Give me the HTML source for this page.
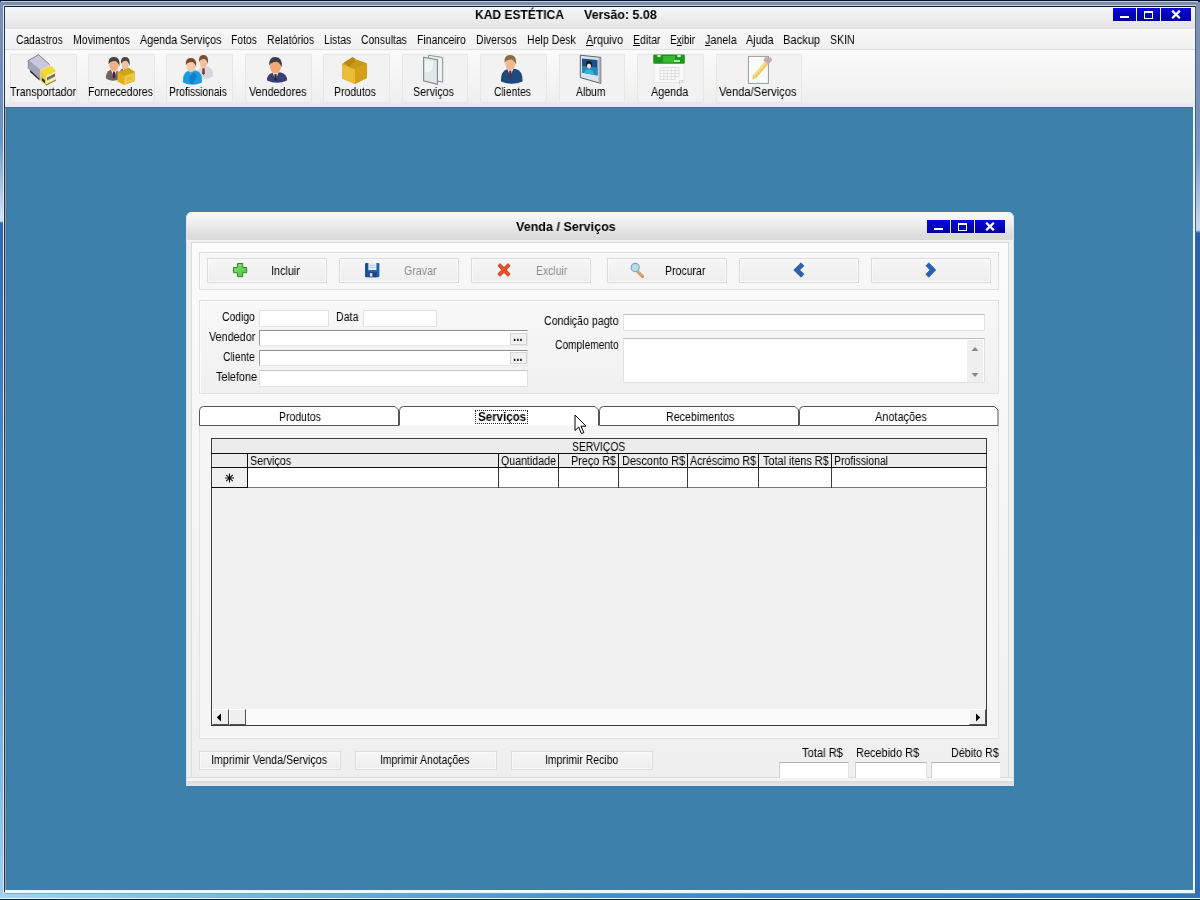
<!DOCTYPE html>
<html lang="pt-BR"><head><meta charset="utf-8"><title>KAD ESTÉTICA</title>
<style>
html,body{margin:0;padding:0}
body{width:1200px;height:900px;position:relative;overflow:hidden;background:#3d80ab;font-family:"Liberation Sans",sans-serif;font-size:12px;color:#000}
div,span,svg{position:absolute;box-sizing:border-box}
.t{white-space:nowrap;line-height:1;transform-origin:0 0;display:block;will-change:transform}
.tb{background:#f2f2f2;border:1px solid #e7e7e7;border-radius:1px}
.btn{background:linear-gradient(#f6f6f6,#eeeeee);border:1px solid #dcdcdc;box-shadow:inset 0 0 0 1px #f9f9f9}
.pan{border:1px solid #dfdfdf;background:#f7f7f7;box-shadow:inset 1px 1px 0 #fdfdfd}
.inp{background:#fff;border:1px solid #e2e2e2}
.inp3{background:#fff;border:1px solid #e8e8e8;border-top-color:#8e8e8e;border-left-color:#9a9a9a}
.dots{background:#f1f1f1;border:1px solid #d4d4d4}
.cb{background:linear-gradient(#0a0ae0,#000098);}
.hl{background:#111;height:1px}
.vl{background:#111;width:1px}
</style></head><body>

<div style="left:0;top:0;width:1200px;height:900px;background:#5a8cc0"></div>
<div style="left:0;top:0;width:5px;height:900px;background:linear-gradient(#7a8fb5 0,#6f8fba 110px,#6a95c6 140px,#d0e0f4 215px,#d0e0f4 221px,#3068b0 223px,#4f98d0 560px,#9dcdee 890px)"></div>
<div style="left:1195px;top:0;width:5px;height:900px;background:linear-gradient(#7f90b2 0,#7890b8 110px,#7498c8 150px,#c4d4ea 222px,#c4d4ea 230px,#2860a8 233px,#2c6cb4 560px,#2c70b8 900px)"></div>
<div style="left:0;top:0;width:1200px;height:7px;background:linear-gradient(#06102c 0,#06102c 1px,#bccbe2 1px,#bccbe2 2px,#7a8aa6 2px,#8092ae 5px,#c4d2ea 5px,#c4d2ea 6px,#18222e 6px)"></div>
<div style="left:0;top:0;width:2px;height:1px;background:#101c50"></div><div style="left:0;top:1px;width:1px;height:2px;background:#2a3870"></div><div style="left:1198px;top:0;width:2px;height:2px;background:#101c50"></div>
<div style="left:0;top:2px;width:3px;height:5px;background:#7a8fb5"></div><div style="left:1196px;top:2px;width:4px;height:5px;background:#7f90b2"></div>
<div style="left:3px;top:6px;width:1px;height:888px;background:#dbe8fa"></div>
<div style="left:4px;top:6px;width:1px;height:886px;background:#263648"></div>
<div style="left:1195px;top:6px;width:1px;height:886px;background:#4a6178"></div>
<div style="left:0;top:893px;width:1200px;height:7px;background:linear-gradient(90deg,#a4d2f0 0,#7ab4dc 250px,#4c8cc4 600px,#3474b4 1200px)"></div>
<div style="left:5px;top:893px;width:1190px;height:1px;background:#7f9db6;opacity:.8"></div>
<div style="left:0;top:898px;width:1200px;height:2px;background:linear-gradient(#e8fbff 0,#e8fbff 1px,#0c2038 1px)"></div>
<div style="left:5px;top:7px;width:1190px;height:886px;background:#3d80ab"></div>
<div style="left:5px;top:107px;width:1188px;height:2px;background:linear-gradient(#4f6f8c,#447aa2)"></div>
<div style="left:5px;top:108px;width:1px;height:782px;background:#8ca4b8"></div>
<div style="left:6px;top:108px;width:1px;height:782px;background:#4f7088"></div>
<div style="left:1193px;top:107px;width:2px;height:786px;background:#e6f8ff"></div>
<div style="left:5px;top:890px;width:1190px;height:3px;background:#eafaff"></div>
<div style="left:5px;top:7px;width:1190px;height:22px;background:linear-gradient(#f3f7fc,#f2f2f2 30%,#e2e2e2)"></div>
<span class="t" style="left:474.5px;top:7.8px;font-size:13px;font-weight:bold;transform:scaleX(0.926);">KAD ESTÉTICA</span>
<span class="t" style="left:583.5px;top:7.8px;font-size:13px;font-weight:bold;transform:scaleX(0.958);">Versão: 5.08</span>
<div class="cb" style="left:1113px;top:8px;width:23.0px;height:13px"></div>
<div style="left:1120.0px;top:15.8px;width:9px;height:2.4px;background:#fff"></div>
<div class="cb" style="left:1137px;top:8px;width:23.0px;height:13px"></div>
<div style="left:1144.0px;top:11.0px;width:9px;height:8px;border:1px solid #fff;border-top-width:2.5px"></div>
<div class="cb" style="left:1161px;top:8px;width:30.0px;height:13px"></div>
<svg style="left:1171.0px;top:10.0px" width="10" height="9" viewBox="0 0 10 9"><path d="M1.2 0.8L8.8 8.2M8.8 0.8L1.2 8.2" stroke="#fff" stroke-width="2.3"/></svg>
<div style="left:5px;top:29px;width:1190px;height:21px;background:linear-gradient(#f7f7f7,#f1f1f1)"></div>
<div style="left:5px;top:49px;width:1190px;height:1.5px;background:#dddfe1"></div>
<span class="t" style="left:16.2px;top:33.5px;font-size:12px;transform:scaleX(0.855);">Cadastros</span>
<span class="t" style="left:73.0px;top:33.5px;font-size:12px;transform:scaleX(0.881);">Movimentos</span>
<span class="t" style="left:139.5px;top:33.5px;font-size:12px;transform:scaleX(0.898);">Agenda Serviços</span>
<span class="t" style="left:231.2px;top:33.5px;font-size:12px;transform:scaleX(0.860);">Fotos</span>
<span class="t" style="left:267.0px;top:33.5px;font-size:12px;transform:scaleX(0.874);">Relatórios</span>
<span class="t" style="left:324.0px;top:33.5px;font-size:12px;transform:scaleX(0.868);">Listas</span>
<span class="t" style="left:361.2px;top:33.5px;font-size:12px;transform:scaleX(0.858);">Consultas</span>
<span class="t" style="left:417.0px;top:33.5px;font-size:12px;transform:scaleX(0.873);">Financeiro</span>
<span class="t" style="left:476.2px;top:33.5px;font-size:12px;transform:scaleX(0.874);">Diversos</span>
<span class="t" style="left:526.9px;top:33.5px;font-size:12px;transform:scaleX(0.882);">Help Desk</span>
<span class="t" style="left:586.0px;top:33.5px;font-size:12px;transform:scaleX(0.912);"><u>A</u>rquivo</span>
<span class="t" style="left:632.5px;top:33.5px;font-size:12px;transform:scaleX(0.877);"><u>E</u>ditar</span>
<span class="t" style="left:670.0px;top:33.5px;font-size:12px;transform:scaleX(0.833);">E<u>x</u>ibir</span>
<span class="t" style="left:704.5px;top:33.5px;font-size:12px;transform:scaleX(0.897);"><u>J</u>anela</span>
<span class="t" style="left:745.5px;top:33.5px;font-size:12px;transform:scaleX(0.899);">Ajuda</span>
<span class="t" style="left:783.1px;top:33.5px;font-size:12px;transform:scaleX(0.927);">Backup</span>
<span class="t" style="left:829.9px;top:33.5px;font-size:12px;transform:scaleX(0.881);">SKIN</span>
<div style="left:5px;top:50px;width:1190px;height:57px;background:linear-gradient(#fafafa 0,#f5f5f5 28px,#eef0ec 52px,#e9e5f7 54px,#e8e4f8 57px)"></div>
<div class="tb" style="left:10px;top:54px;width:67px;height:49px"></div>
<span class="t" style="left:9.5px;top:86.2px;font-size:12px;transform:scaleX(0.881);">Transportador</span>
<div class="tb" style="left:88px;top:54px;width:67px;height:49px"></div>
<span class="t" style="left:88.1px;top:86.2px;font-size:12px;transform:scaleX(0.877);">Fornecedores</span>
<div class="tb" style="left:166px;top:54px;width:67px;height:49px"></div>
<span class="t" style="left:169.1px;top:86.2px;font-size:12px;transform:scaleX(0.851);">Profissionais</span>
<div class="tb" style="left:245px;top:54px;width:67px;height:49px"></div>
<span class="t" style="left:248.5px;top:86.2px;font-size:12px;transform:scaleX(0.898);">Vendedores</span>
<div class="tb" style="left:323px;top:54px;width:67px;height:49px"></div>
<span class="t" style="left:334.1px;top:86.2px;font-size:12px;transform:scaleX(0.872);">Produtos</span>
<div class="tb" style="left:402px;top:54px;width:66px;height:49px"></div>
<span class="t" style="left:413.1px;top:86.2px;font-size:12px;transform:scaleX(0.889);">Serviços</span>
<div class="tb" style="left:480px;top:54px;width:67px;height:49px"></div>
<span class="t" style="left:494.1px;top:86.2px;font-size:12px;transform:scaleX(0.851);">Clientes</span>
<div class="tb" style="left:559px;top:54px;width:66px;height:49px"></div>
<span class="t" style="left:575.5px;top:86.2px;font-size:12px;transform:scaleX(0.867);">Album</span>
<div class="tb" style="left:637px;top:54px;width:67px;height:49px"></div>
<span class="t" style="left:650.5px;top:86.2px;font-size:12px;transform:scaleX(0.899);">Agenda</span>
<div class="tb" style="left:716px;top:54px;width:86px;height:49px"></div>
<span class="t" style="left:718.5px;top:86.2px;font-size:12px;transform:scaleX(0.929);">Venda/Serviços</span>
<svg style="left:0;top:50px" width="1200" height="57" viewBox="0 50 1200 57"><g><path d="M28 60.5L38.5 54.5L49.5 64.5L49.5 70L40.5 75.5L40.5 80L29 69.5Z" fill="#b4b4c8"/><path d="M28 60.5L38.5 54.5L49.5 64.5L40 69.5Z" fill="#c8c8dc"/><path d="M40 69.5L49.5 64.5L49.5 70L40.5 75.5Z" fill="#e8d8c0"/><path d="M29 60.5L40 69.5L40.5 80L29 69.5Z" fill="#a4a4b8"/><path d="M30 70L39.5 78.8L39.5 80.5L30 72Z" fill="#2a2a30"/><path d="M28.3 69L28.3 60.5L38.5 54.7L49.6 64.6" fill="none" stroke="#70707e" stroke-width=".8"/><path d="M40.5 71L51 66L56 71L56 80L46 85.5L41 81.5Z" fill="#e8d048"/><path d="M40.5 71L51 66L56 71L46 76Z" fill="#f0dc30"/><path d="M46 76L56 71L56 80L46 85.5Z" fill="#f4ecb0"/><path d="M47 77.5L55 73.5L55 76.5L47 80.5Z" fill="#707070"/><path d="M41.5 80L45 83.5L45 80.5L42.5 78Z" fill="#2a2a20"/><path d="M46 84.5L56 79.5L56 80.5L46 85.8Z" fill="#807820"/></g><path d="M119 78Q118.5 70 123.2 68L128.8 68Q133.5 70 133 78Q126.0 82.5 119 78Z" fill="#6a6258"/><path d="M122.3 68L125.3 75L128.3 68Z" fill="#f4f4f4"/><path d="M124.3 69.5L126.3 69.5L126.6 75L125.3 76.5L124.0 75Z" fill="#802020"/><ellipse cx="125.3" cy="64.5" rx="3.5" ry="5.7" fill="#f0c0a0"/><path d="M121.0 63.8Q120.5 56.5 125.3 57.0Q130.6 57.0 129.6 65.8Q128.1 61.2 126.1 60.8Q122.8 60.5 121.0 63.8Z" fill="#48443c"/><path d="M106 78.5Q105.5 72 110.2 70L115.8 70Q120.5 72 120 78.5Q113.0 83.0 106 78.5Z" fill="#6c665e"/><path d="M111 70L114 77L117 70Z" fill="#f4f4f4"/><path d="M113 71.5L115 71.5L115.3 77L114 78.5L112.7 77Z" fill="#5a1848"/><ellipse cx="114" cy="65.0" rx="4.7" ry="6.2" fill="#f0b088"/><path d="M108.5 64.2Q108.0 56.5 114.0 57.0Q120.5 57.0 119.5 66.2Q118.0 61.8 115.1 61.0Q110.7 60.8 108.5 64.2Z" fill="#48403a"/><path d="M117.5 72.5L128.5 68L135 72L135 81L124 85L117.5 81.5Z" fill="#e0b020"/><path d="M117.5 72.5L128.5 68L135 72L124 76Z" fill="#d0a418"/><path d="M124 76L135 72L135 81L124 85Z" fill="#e8c030"/><path d="M125.5 77.5L133.5 74.5L133.5 79.5L125.5 82.5Z" fill="none" stroke="#f0d468" stroke-width="1"/><path d="M197.5 76.5Q197.0 68.5 202.2 66.5L208.3 66.5Q213.5 68.5 213 76.5Q205.2 81.0 197.5 76.5Z" fill="#d4d8dc"/><path d="M200.5 66.5L203.5 73.5L206.5 66.5Z" fill="#f4d8d8"/><path d="M202.5 68.0L204.5 68.0L204.8 73.5L203.5 75.0L202.2 73.5Z" fill="#802838"/><ellipse cx="203.5" cy="62.7" rx="3.7" ry="5.9" fill="#f0c0a0"/><path d="M199.0 62.0Q198.5 54.5 203.5 55.0Q209.0 55.0 208.0 64.0Q206.5 59.5 204.4 58.9Q200.8 58.6 199.0 62.0Z" fill="#7a5030"/><path d="M183 82.5Q182.5 72.5 188.7 70.5L196.3 70.5Q202.5 72.5 202 82.5Q192.5 87.0 183 82.5Z" fill="#1c9ce0"/><path d="M188 70.5L191 77.5L194 70.5Z" fill="#28a8e8"/><ellipse cx="191" cy="66.0" rx="4.5" ry="6.2" fill="#f4c8a8"/><path d="M185.8 65.2Q185.2 57.5 191.0 58.0Q197.2 58.0 196.2 67.2Q194.8 62.8 192.1 62.0Q187.8 61.8 185.8 65.2Z" fill="#7a4a28"/><path d="M189 76L194 72L197 76L193 84L190 83Z" fill="#1470c0" opacity=".7"/><path d="M267 80.5Q266.5 74.5 273.0 72.5L281.0 72.5Q287.5 74.5 287 80.5Q277.0 85.0 267 80.5Z" fill="#3c3c7c"/><path d="M272.5 72.5L275.5 79.5L278.5 72.5Z" fill="#f4f4f4"/><path d="M274.5 74.0L276.5 74.0L276.8 79.5L275.5 81.0L274.2 79.5Z" fill="#183818"/><ellipse cx="275.5" cy="66.2" rx="5.5" ry="7.4" fill="#f4a878"/><path d="M269.2 65.5Q268.8 56.5 275.5 57.0Q282.8 57.0 281.8 67.5Q280.2 63.0 276.8 61.8Q271.8 61.5 269.2 65.5Z" fill="#3c3c46"/><path d="M342 64L352 58L367 63.5L367 78L355 84L342 78.5Z" fill="#e4b428"/><path d="M342 64L352 58L367 63.5L355 69.5Z" fill="#c89818"/><path d="M344 62.5L352.5 57L355 58.5L354.5 62L351 64.5L350 67.5Z" fill="#b88810"/><path d="M355 69.5L367 63.5L367 78L355 84Z" fill="#d4a018"/><path d="M342 64L355 69.5L355 84L342 78.5Z" fill="#ecbc38"/><path d="M428.6 55.3L442.7 57.5L442.7 82.2L428.6 79Z" fill="#eef2f2" stroke="#8a9292" stroke-width="1"/><path d="M423.6 57.3L437.4 59.8L437.4 84.2L423.6 80.8Z" fill="#dfe8e8" stroke="#7f8888" stroke-width="1.1"/><path d="M425 60L433 61.5Q434 70 429 72L425 72Z" fill="#f4f8f8" opacity=".8"/><path d="M501 81.5Q500.5 71 507.4 69L516.0 69Q523.0 71 522.5 81.5Q511.8 86.0 501 81.5Z" fill="#1c4a7c"/><path d="M507.3 69L510.3 76L513.3 69Z" fill="#f4f4f4"/><path d="M509.3 70.5L511.3 70.5L511.6 76L510.3 77.5L509.0 76Z" fill="#801828"/><ellipse cx="510.3" cy="63.5" rx="5.0" ry="6.7" fill="#f0b890"/><path d="M504.6 62.8Q504.1 54.5 510.3 55.0Q517.0 55.0 516.0 64.8Q514.5 60.2 511.4 59.4Q506.9 59.1 504.6 62.8Z" fill="#8a6a40"/><path d="M580.3 55.2L600.8 57.4L600.8 83.4L580.3 77.6Z" fill="#d8e4ee" stroke="#5c6468" stroke-width="1"/><path d="M582 58.5L597.5 60L597.5 75.5L582 72.5Z" fill="#1c5088"/><path d="M582 66L597.5 67.5L597.5 75.5L582 72.5Z" fill="#2a88b8"/><ellipse cx="589" cy="64.5" rx="3" ry="3.4" fill="#101418"/><ellipse cx="589" cy="66" rx="2.2" ry="2.6" fill="#f4d8c8"/><path d="M584.5 73L585.5 70.5Q589 68.5 592.5 70.8L594 74.8Z" fill="#30b8d8"/><path d="M598.5 58L600.5 58.2L600.5 82.5L598.5 82Z" fill="#a8b0b8"/><rect x="654" y="63" width="30" height="19.5" fill="#f8f8f8" stroke="#e4e4e4" stroke-width=".8"/><rect x="653.2" y="54.6" width="31.6" height="9.2" rx="1" fill="#1c961a"/><rect x="663" y="56" width="12" height="6.5" fill="#44c038" opacity=".8"/><ellipse cx="659" cy="56" rx="2" ry="1.3" fill="#c8f0c0"/><ellipse cx="679" cy="56" rx="2" ry="1.3" fill="#c8f0c0"/><rect x="674" y="60" width="6" height="2" fill="#a8f0a0"/><path d="M660 67.5H679M660 70.5H679M660 73.5H679M660 76.5H679M660 79.5H675M660 67.5V79.5M663.8 67.5V79.5M667.6 67.5V79.5M671.4 67.5V79.5M675.2 67.5V79.5M679 67.5V76.5" stroke="#dcdcdc" stroke-width=".8" fill="none"/><path d="M679.5 80.5H683.5L679.5 84Z" fill="#f4f4f4" stroke="#c4c4c4" stroke-width=".6"/><rect x="748.4" y="56.4" width="20" height="27" fill="#f8fcfa" stroke="#9a9a9a" stroke-width="1"/><path d="M752.3 79.6L753.2 75.2L766.5 60L769.6 62.6L756.4 77.8Z" fill="#f0c85c"/><path d="M753.2 75.2L766.5 60L768 61.3L754.6 76.6Z" fill="#f8dc90"/><path d="M764 58.5L767 56.5L768.5 59L771 57L772 60.5L768.5 64L763.5 61Z" fill="#c0a8b4"/></svg>
<div style="left:186px;top:212px;width:828px;height:574px;background:#eef0ee;border-radius:6px 6px 0 0;border-left:1px solid #cfe4f4;border-right:1px solid #d4e6f2;border-bottom:1px solid #d4e8f8"></div>
<div style="left:186px;top:212px;width:828px;height:30px;background:linear-gradient(#f9fcf9 0,#f6f6f6 4px,#e8e8e8 16px,#dcdcdc 23px,#dadada 28.5px,#f2f2f2 28.5px,#f2f2f2 30px);border-radius:6px 6px 0 0;border-left:1px solid #d8e8f4;border-right:1px solid #d8e8f4"></div>
<div style="left:187px;top:777px;width:826px;height:8px;background:linear-gradient(#dedede 0,#dedede 1px,#f4f4f4 1px,#f4f4f4 4px,#dadada 4px,#e6e6e6 8px)"></div>
<div style="left:191px;top:242px;width:818px;height:535px;background:linear-gradient(#fbfbfb,#f4f4f4 65%,#efefef);border:1px solid #dadcda;border-bottom:none"></div>
<span class="t" style="left:515.5px;top:219.5px;font-size:13px;font-weight:bold;transform:scaleX(0.965);">Venda / Serviços</span>
<div class="cb" style="left:927px;top:220px;width:22.6px;height:13px"></div>
<div style="left:933.8px;top:227.8px;width:9px;height:2.4px;background:#fff"></div>
<div class="cb" style="left:951.2px;top:220px;width:22.6px;height:13px"></div>
<div style="left:958.0px;top:223.0px;width:9px;height:8px;border:1px solid #fff;border-top-width:2.5px"></div>
<div class="cb" style="left:975.2px;top:220px;width:29.6px;height:13px"></div>
<svg style="left:985.0px;top:222.0px" width="10" height="9" viewBox="0 0 10 9"><path d="M1.2 0.8L8.8 8.2M8.8 0.8L1.2 8.2" stroke="#fff" stroke-width="2.3"/></svg>
<div class="pan" style="left:199px;top:252px;width:800px;height:38px"></div>
<div class="btn" style="left:207px;top:258px;width:120px;height:25px"></div>
<div class="btn" style="left:339px;top:258px;width:120px;height:25px"></div>
<div class="btn" style="left:471px;top:258px;width:120px;height:25px"></div>
<div class="btn" style="left:607px;top:258px;width:120px;height:25px"></div>
<div class="btn" style="left:739px;top:258px;width:120px;height:25px"></div>
<div class="btn" style="left:871px;top:258px;width:120px;height:25px"></div>
<span class="t" style="left:271.1px;top:265.4px;font-size:12px;transform:scaleX(0.903);">Incluir</span>
<span class="t" style="left:403.7px;top:265.4px;font-size:12px;color:#8c8c8c;transform:scaleX(0.886);">Gravar</span>
<span class="t" style="left:536.2px;top:265.4px;font-size:12px;color:#8c8c8c;transform:scaleX(0.869);">Excluir</span>
<span class="t" style="left:664.5px;top:265.4px;font-size:12px;transform:scaleX(0.878);">Procurar</span>
<svg style="left:232px;top:262px" width="16" height="16" viewBox="0 0 16 16"><defs><linearGradient id="gp" x1="0" y1="0" x2="1" y2="1"><stop offset="0" stop-color="#8ae07a"/><stop offset="1" stop-color="#48c038"/></linearGradient></defs><path d="M5.5 1.5h5.2v4h4v5.2h-4v4h-5.2v-4h-4v-5.2h4z" fill="url(#gp)" stroke="#348a28" stroke-width="1"/></svg>
<svg style="left:364px;top:262px" width="17" height="17" viewBox="0 0 17 17"><rect x="1.2" y="1" width="14.2" height="14.2" rx="1.2" fill="#2462ac"/><rect x="1.2" y="1" width="2.4" height="14.2" rx="1" fill="#1c4c90"/><rect x="4.4" y="1" width="8" height="7" fill="#e4f2f8"/><path d="M5.5 3.3h6M5.5 5.5h6" stroke="#a8c8dc" stroke-width=".9"/><rect x="4.2" y="10.2" width="8.6" height="5" fill="#1c4480"/><rect x="5.8" y="11.2" width="2.6" height="3.4" fill="#d0e0f0"/></svg>
<svg style="left:496.2px;top:262px" width="16" height="16" viewBox="0 0 16 16"><path d="M2 3.5L4 1.5L8 5.5L12 1.5L14.2 3.8L10.4 8L14.2 12L12 14.4L8 10.4L4 14.4L1.8 12L5.6 8Z" fill="#e8502a" stroke="#c03a18" stroke-width=".8"/></svg>
<svg style="left:629px;top:262px" width="16" height="16" viewBox="0 0 16 16"><path d="M8.6 9.6L13.6 14.6" stroke="#c08850" stroke-width="2.8" stroke-linecap="round"/><path d="M8.8 9.4L13.4 14" stroke="#f0d8b0" stroke-width="1" stroke-linecap="round"/><circle cx="6.2" cy="5.5" r="4.1" fill="#b8dcf0" stroke="#88a0b0" stroke-width="1.1"/></svg>
<svg style="left:792px;top:261px" width="14" height="18" viewBox="0 0 14 18"><path d="M1.7 9L9 1.8L12 4.8L7.7 9L12 13.2L9 16.2Z" fill="#2a62b0" stroke="#1c4888" stroke-width=".6"/></svg>
<svg style="left:924px;top:261px" width="14" height="18" viewBox="0 0 14 18"><path d="M11.8 9L4.8 1.8L1.9 4.8L6 9L1.9 13.2L4.8 16.2Z" fill="#2a62b0" stroke="#1c4888" stroke-width=".6"/></svg>
<div class="pan" style="left:199px;top:300px;width:800px;height:94px;background:linear-gradient(#f8f8f8,#f0f0f0)"></div>
<span class="t" style="left:222.2px;top:310.6px;font-size:12px;transform:scaleX(0.863);">Codigo</span>
<div class="inp" style="left:259px;top:310px;width:70px;height:17px"></div>
<span class="t" style="left:336.2px;top:310.6px;font-size:12px;transform:scaleX(0.888);">Data</span>
<div class="inp" style="left:363px;top:310px;width:74px;height:17px"></div>
<span class="t" style="left:208.7px;top:330.6px;font-size:12px;transform:scaleX(0.901);">Vendedor</span>
<div class="inp3" style="left:259px;top:330px;width:269px;height:16px"></div>
<span class="t" style="left:223.0px;top:350.6px;font-size:12px;transform:scaleX(0.849);">Cliente</span>
<div class="inp3" style="left:259px;top:350px;width:269px;height:16px"></div>
<span class="t" style="left:215.5px;top:370.6px;font-size:12px;transform:scaleX(0.904);">Telefone</span>
<div class="inp" style="left:259px;top:370px;width:269px;height:17px;border-top-color:#c8c8c8"></div>
<div class="dots" style="left:510.3px;top:332.5px;width:16.5px;height:12px"></div>
<span class="t" style="left:512.8px;top:328.4px;font-size:15px;font-weight:bold;transform:scaleX(0.768);">...</span>
<div class="dots" style="left:510.3px;top:352px;width:16.5px;height:12px"></div>
<span class="t" style="left:512.8px;top:348.4px;font-size:15px;font-weight:bold;transform:scaleX(0.768);">...</span>
<span class="t" style="left:544.2px;top:314.8px;font-size:12px;transform:scaleX(0.886);">Condição pagto</span>
<div class="inp" style="left:623px;top:314px;width:362px;height:17px;border-top-color:#bdbdbd"></div>
<span class="t" style="left:555.0px;top:338.5px;font-size:12px;transform:scaleX(0.853);">Complemento</span>
<div class="inp" style="left:623px;top:338px;width:362px;height:45px;border-top-color:#bdbdbd"></div>
<div style="left:967px;top:340px;width:16px;height:42px;background:#efefef"></div>
<svg style="left:970px;top:344px" width="10" height="36" viewBox="0 0 10 36"><path d="M1.5 7L5 3L8.5 7Z M1.5 29L5 33L8.5 29Z" fill="#8a8a8a"/></svg>
<div style="left:199px;top:425px;width:800px;height:314px;background:#f5f5f5;border:1px solid #e4e4e4;border-top:none"></div>
<svg style="left:199px;top:406px" width="201" height="20.5" viewBox="0 0 201 20.5"><path d="M0.5 19.5V4.5Q0.5 0.5 4.5 0.5H196L199.5 4V19.5Z" fill="#fff" stroke="#555" stroke-width="1"/></svg>
<svg style="left:399px;top:406px" width="201" height="20.5" viewBox="0 0 201 20.5"><path d="M0.5 19.5V4.5Q0.5 0.5 4.5 0.5H196L199.5 4V19.5" fill="#fff" stroke="#555" stroke-width="1"/></svg>
<svg style="left:599px;top:406px" width="201" height="20.5" viewBox="0 0 201 20.5"><path d="M0.5 19.5V4.5Q0.5 0.5 4.5 0.5H196L199.5 4V19.5Z" fill="#fff" stroke="#555" stroke-width="1"/></svg>
<svg style="left:799px;top:406px" width="200.5" height="20.5" viewBox="0 0 200.5 20.5"><path d="M0.5 19.5V4.5Q0.5 0.5 4.5 0.5H195.5L199.0 4V19.5Z" fill="#fff" stroke="#555" stroke-width="1"/></svg>
<span class="t" style="left:279.1px;top:411.4px;font-size:12px;transform:scaleX(0.872);">Produtos</span>
<span class="t" style="left:477.5px;top:411.4px;font-size:12px;font-weight:bold;transform:scaleX(0.963);">Serviços</span>
<div style="left:475px;top:410px;width:53px;height:14px;border:1px dotted #222"></div>
<span class="t" style="left:665.7px;top:411.4px;font-size:12px;transform:scaleX(0.890);">Recebimentos</span>
<span class="t" style="left:874.7px;top:411.4px;font-size:12px;transform:scaleX(0.913);">Anotações</span>
<div style="left:211px;top:438px;width:776px;height:288px;background:#f0f0f0;border:1px solid #3c3c3c"></div>
<div style="left:212px;top:439px;width:774px;height:28px;background:#ececec"></div>
<div style="left:248px;top:468px;width:738px;height:19px;background:#fff"></div>
<div class="hl" style="left:211px;top:453px;width:776px"></div>
<div class="hl" style="left:211px;top:467px;width:776px"></div>
<div class="hl" style="left:211px;top:487px;width:37px"></div>
<div class="hl" style="left:248px;top:487px;width:739px;background:#777"></div>
<div class="vl" style="left:247px;top:453px;height:15px"></div>
<div class="vl" style="left:247px;top:468px;height:20px;background:#111"></div>
<div class="vl" style="left:498px;top:453px;height:15px"></div>
<div class="vl" style="left:498px;top:468px;height:20px;background:#3a3a3a"></div>
<div class="vl" style="left:558px;top:453px;height:15px"></div>
<div class="vl" style="left:558px;top:468px;height:20px;background:#3a3a3a"></div>
<div class="vl" style="left:618px;top:453px;height:15px"></div>
<div class="vl" style="left:618px;top:468px;height:20px;background:#3a3a3a"></div>
<div class="vl" style="left:687px;top:453px;height:15px"></div>
<div class="vl" style="left:687px;top:468px;height:20px;background:#3a3a3a"></div>
<div class="vl" style="left:758px;top:453px;height:15px"></div>
<div class="vl" style="left:758px;top:468px;height:20px;background:#3a3a3a"></div>
<div class="vl" style="left:831px;top:453px;height:15px"></div>
<div class="vl" style="left:831px;top:468px;height:20px;background:#3a3a3a"></div>
<span class="t" style="left:572.2px;top:440.6px;font-size:12px;transform:scaleX(0.861);">SERVIÇOS</span>
<span class="t" style="left:250.0px;top:455.3px;font-size:12px;transform:scaleX(0.895);">Serviços</span>
<span class="t" style="left:501.0px;top:455.3px;font-size:12px;transform:scaleX(0.885);">Quantidade</span>
<span class="t" style="left:571.2px;top:455.3px;font-size:12px;transform:scaleX(0.900);">Preço R$</span>
<span class="t" style="left:621.8px;top:455.3px;font-size:12px;transform:scaleX(0.910);">Desconto R$</span>
<span class="t" style="left:689.7px;top:455.3px;font-size:12px;transform:scaleX(0.884);">Acréscimo R$</span>
<span class="t" style="left:763.3px;top:455.3px;font-size:12px;transform:scaleX(0.904);">Total itens R$</span>
<span class="t" style="left:833.8px;top:455.3px;font-size:12px;transform:scaleX(0.872);">Profissional</span>
<svg style="left:224px;top:473px" width="11" height="10" viewBox="0 0 11 10"><path d="M5.5 0.5V9.5M1 5H10M2.2 1.8L8.8 8.2M8.8 1.8L2.2 8.2" stroke="#111" stroke-width="1.1"/></svg>
<div style="left:212px;top:708.5px;width:774px;height:16.5px;background:#fafafa"></div>
<div style="left:212px;top:708.5px;width:17px;height:16.5px;background:#efefef;border:1px solid #fff;border-right-color:#555;border-bottom-color:#555"></div>
<div style="left:229px;top:708.5px;width:17px;height:16.5px;background:#efefef;border:1px solid #fff;border-right-color:#555;border-bottom-color:#555"></div>
<div style="left:969px;top:708.5px;width:17px;height:16.5px;background:#efefef;border:1px solid #fff;border-right-color:#555;border-bottom-color:#555"></div>
<svg style="left:216px;top:713px" width="6" height="9" viewBox="0 0 6 9"><path d="M5 0.5V8.5L0.8 4.5Z" fill="#000"/></svg>
<svg style="left:975px;top:713px" width="6" height="9" viewBox="0 0 6 9"><path d="M1 0.5V8.5L5.2 4.5Z" fill="#000"/></svg>
<div class="btn" style="left:199px;top:750.5px;width:142px;height:19px"></div>
<div class="btn" style="left:355px;top:750.5px;width:142px;height:19px"></div>
<div class="btn" style="left:511px;top:750.5px;width:142px;height:19px"></div>
<span class="t" style="left:211.1px;top:753.6px;font-size:12px;transform:scaleX(0.893);">Imprimir Venda/Serviços</span>
<span class="t" style="left:380.3px;top:753.6px;font-size:12px;transform:scaleX(0.870);">Imprimir Anotações</span>
<span class="t" style="left:544.9px;top:753.6px;font-size:12px;transform:scaleX(0.872);">Imprimir Recibo</span>
<span class="t" style="left:802.2px;top:747.0px;font-size:12px;transform:scaleX(0.929);">Total R$</span>
<span class="t" style="left:855.9px;top:747.0px;font-size:12px;transform:scaleX(0.910);">Recebido R$</span>
<span class="t" style="left:951.3px;top:747.0px;font-size:12px;transform:scaleX(0.896);">Débito R$</span>
<div class="inp" style="left:779px;top:762px;width:70px;height:16px;border-top-color:#b4b4b4;border-left-color:#d0d0d0;border-bottom:none"></div>
<div class="inp" style="left:855px;top:762px;width:72px;height:16px;border-top-color:#b4b4b4;border-left-color:#d0d0d0;border-bottom:none"></div>
<div class="inp" style="left:931px;top:762px;width:69px;height:16px;border-top-color:#b4b4b4;border-left-color:#d0d0d0;border-bottom:none;border-right:none"></div>
<div style="left:1000px;top:745px;width:9px;height:34px;background:linear-gradient(90deg,#f4f4f4 0,#f4f4f4 0px,transparent 0)"></div>
<svg style="left:573.5px;top:413.5px" width="14" height="21" viewBox="0 0 14 21"><path d="M1 1V16.5L4.6 13L7.4 19.6L9.8 18.6L7 12.2H12Z" fill="#fff" stroke="#000" stroke-width="1"/></svg>
</body></html>
